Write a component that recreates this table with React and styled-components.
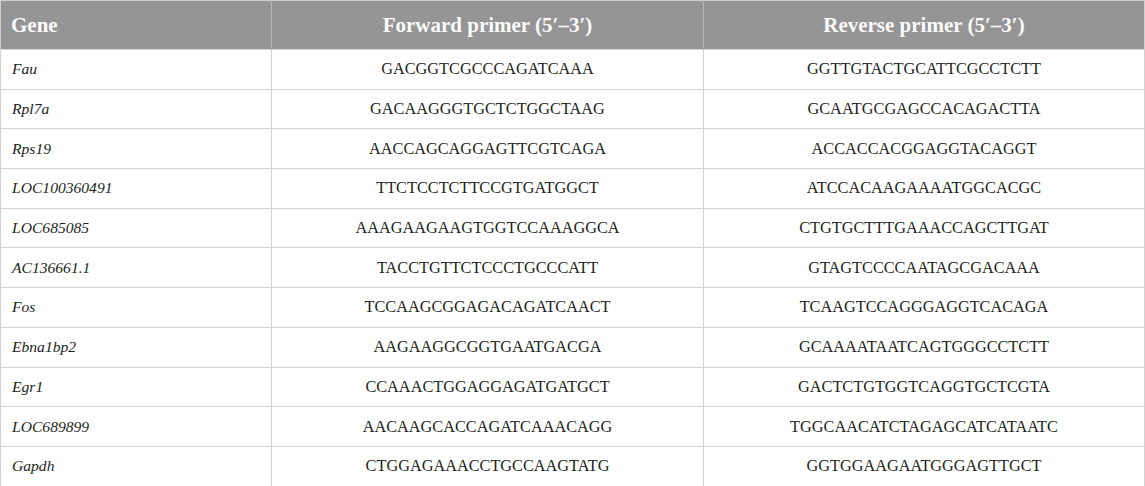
import * as React from "react";
import styled, { createGlobalStyle } from "styled-components";

const rows = [
  ["Fau", "GACGGTCGCCCAGATCAAA", "GGTTGTACTGCATTCGCCTCTT"],
  ["Rpl7a", "GACAAGGGTGCTCTGGCTAAG", "GCAATGCGAGCCACAGACTTA"],
  ["Rps19", "AACCAGCAGGAGTTCGTCAGA", "ACCACCACGGAGGTACAGGT"],
  ["LOC100360491", "TTCTCCTCTTCCGTGATGGCT", "ATCCACAAGAAAATGGCACGC"],
  ["LOC685085", "AAAGAAGAAGTGGTCCAAAGGCA", "CTGTGCTTTGAAACCAGCTTGAT"],
  ["AC136661.1", "TACCTGTTCTCCCTGCCCATT", "GTAGTCCCCAATAGCGACAAA"],
  ["Fos", "TCCAAGCGGAGACAGATCAACT", "TCAAGTCCAGGGAGGTCACAGA"],
  ["Ebna1bp2", "AAGAAGGCGGTGAATGACGA", "GCAAAATAATCAGTGGGCCTCTT"],
  ["Egr1", "CCAAACTGGAGGAGATGATGCT", "GACTCTGTGGTCAGGTGCTCGTA"],
  ["LOC689899", "AACAAGCACCAGATCAAACAGG", "TGGCAACATCTAGAGCATCATAATC"],
  ["Gapdh", "CTGGAGAAACCTGCCAAGTATG", "GGTGGAAGAATGGGAGTTGCT"],
];

const GlobalStyle = createGlobalStyle`
  html, body {
    margin: 0;
    padding: 0;
    background: #ffffff;
  }
  body {
    font-family: "Liberation Serif", "DejaVu Serif", serif;
  }
`;

const Table = styled.table`
  width: 1145px;
  border-collapse: collapse;
  table-layout: fixed;
  border: 1px solid #cfcfcf;
  color: #231f20;
`;

const HeadCell = styled.th`
  background-color: #959595;
  color: #fbfbfb;
  font-size: 21px;
  font-weight: 700;
  height: 48px;
  padding: 0 10px;
  text-align: ${(p) => (p.$left ? "left" : "center")};
  border-left: 1px solid #b4b4b4;
  &:first-child {
    border-left: none;
  }
`;

const Row = styled.tr`
  height: 39.7px;
`;

const Cell = styled.td`
  font-size: ${(p) => (p.$gene ? "15.6px" : "16.3px")};
  padding: 0 11px;
  border: 1px solid #d2d2d2;
  text-align: ${(p) => (p.$gene ? "left" : "center")};
  font-style: ${(p) => (p.$gene ? "italic" : "normal")};
  white-space: nowrap;
`;

function App() {
  return (
    <>
      <GlobalStyle />
      <Table>
        <colgroup>
          <col style={{ width: 271 }} />
          <col style={{ width: 432 }} />
          <col />
        </colgroup>
        <thead>
          <tr>
            <HeadCell $left>Gene</HeadCell>
            <HeadCell>Forward primer (5′–3′)</HeadCell>
            <HeadCell>Reverse primer (5′–3′)</HeadCell>
          </tr>
        </thead>
        <tbody>
          {rows.map(([gene, fwd, rev]) => (
            <Row key={gene}>
              <Cell $gene>{gene}</Cell>
              <Cell>{fwd}</Cell>
              <Cell>{rev}</Cell>
            </Row>
          ))}
        </tbody>
      </Table>
    </>
  );
}

export default App;
